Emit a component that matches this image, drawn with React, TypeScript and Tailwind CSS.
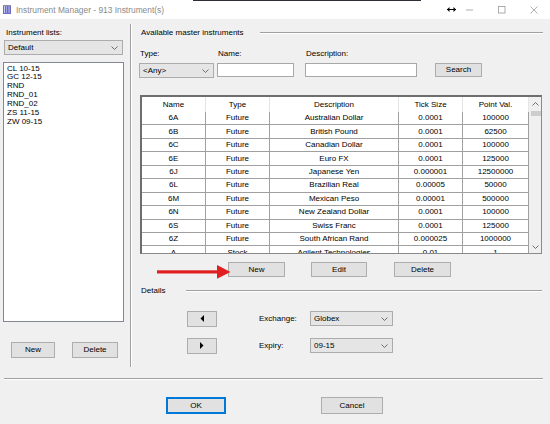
import React from "react";

const rows = [
  ["6A", "Future", "Australian Dollar", "0.0001", "100000"],
  ["6B", "Future", "British Pound", "0.0001", "62500"],
  ["6C", "Future", "Canadian Dollar", "0.0001", "100000"],
  ["6E", "Future", "Euro FX", "0.0001", "125000"],
  ["6J", "Future", "Japanese Yen", "0.000001", "12500000"],
  ["6L", "Future", "Brazilian Real", "0.00005", "50000"],
  ["6M", "Future", "Mexican Peso", "0.00001", "500000"],
  ["6N", "Future", "New Zealand Dollar", "0.0001", "100000"],
  ["6S", "Future", "Swiss Franc", "0.0001", "125000"],
  ["6Z", "Future", "South African Rand", "0.000025", "1000000"],
  ["A", "Stock", "Agilent Technologies", "0.01", "1"],
];

const widths = ["w-[64px]", "w-[64px]", "w-[129px]", "w-[64px]", "w-[66px]"];

function Chevron({ up = false }: { up?: boolean }) {
  return (
    <svg width="7" height="4" viewBox="0 0 7 4">
      <path
        d={up ? "M0.5 3.5 L3.5 0.5 L6.5 3.5" : "M0.5 0.5 L3.5 3.5 L6.5 0.5"}
        fill="none"
        stroke="#606060"
        strokeWidth="0.9"
      />
    </svg>
  );
}

function Combo({ value, className }: { value: string; className: string }) {
  return (
    <div
      className={`flex items-center justify-between h-[15px] bg-[#e5e5e5] border border-[#acacac] pl-[3px] pr-[4px] ${className}`}
    >
      <span>{value}</span>
      <Chevron />
    </div>
  );
}

function Btn({ label, className }: { label: string; className: string }) {
  return (
    <div
      className={`flex items-center justify-center bg-[#e1e1e1] border border-[#adadad] ${className}`}
    >
      {label}
    </div>
  );
}

function Etched({ className }: { className: string }) {
  return (
    <div className={`flex flex-col ${className}`}>
      <div className="h-px bg-[#a0a0a0]" />
      <div className="h-px bg-white" />
    </div>
  );
}

export default function App() {
  return (
    <div className="relative w-[550px] h-[424px] overflow-hidden bg-[#f0f0f0] text-[8px] text-black font-['Liberation_Sans',Arial,sans-serif] leading-[10px]">
      {/* title bar */}
      <div className="relative flex items-center h-[19px] bg-white">
        <div className="absolute top-0 left-[193px] w-[228px] h-px bg-[#2d2d3a]" />
        <svg className="ml-[3px]" width="8" height="9" viewBox="0 0 8 9">
          <rect x="0" y="0" width="8" height="9" fill="#6c6cc4" />
          <rect x="1" y="1" width="1" height="7" fill="#c9c9ef" />
          <rect x="3" y="1" width="1" height="7" fill="#a4a4e4" />
          <rect x="5" y="1" width="2" height="7" fill="#9292d8" />
          <rect x="0" y="0" width="8" height="1" fill="#8d8d9c" />
        </svg>
        <span className="ml-[5px] text-[8.4px] text-[#8a8a8a]">
          Instrument Manager - 913 Instrument(s)
        </span>
        <svg className="ml-auto" width="9" height="5" viewBox="0 0 9 5">
          <path d="M0 2.5 L9 2.5" stroke="#000" strokeWidth="1" />
          <path d="M0 2.5 L2.5 0 L2.5 5 Z M9 2.5 L6.5 0 L6.5 5 Z" fill="#000" />
        </svg>
        <svg className="ml-[10px]" width="8" height="2" viewBox="0 0 8 2">
          <path d="M0 1 L7 1" stroke="#9a9a9a" strokeWidth="0.8" />
        </svg>
        <svg className="ml-[24px]" width="8" height="8" viewBox="0 0 8 8">
          <rect x="0.5" y="0.5" width="6.5" height="6.5" fill="none" stroke="#9a9a9a" strokeWidth="0.8" />
        </svg>
        <svg className="ml-[24px] mr-[12px]" width="8" height="8" viewBox="0 0 8 8">
          <path d="M0.5 0.5 L7.5 7.5 M7.5 0.5 L0.5 7.5" stroke="#9a9a9a" strokeWidth="0.8" />
        </svg>
      </div>

      {/* body */}
      <div className="flex h-[348px]">
        {/* left column */}
        <div className="ml-[3px] w-[121px] flex flex-col">
          <div className="mt-[9px] h-[10px] ml-[3px]">Instrument lists:</div>
          <Combo value="Default" className="mt-[2px] mx-[1px]" />
          <div className="mt-[7px] h-[260px] bg-white border border-[#828790] pl-[3px] pt-[1.5px] leading-[8.9px]">
            <div>CL 10-15</div>
            <div>GC 12-15</div>
            <div>RND</div>
            <div>RND_01</div>
            <div>RND_02</div>
            <div>ZS 11-15</div>
            <div>ZW 09-15</div>
          </div>
          <div className="flex mt-[20px]">
            <Btn label="New" className="ml-[8px] w-[44px] h-[16px]" />
            <Btn label="Delete" className="ml-[17px] w-[46px] h-[16px]" />
          </div>
        </div>

        {/* separator */}
        <div className="ml-[6px] mt-[5px] h-[343px] flex">
          <div className="w-px bg-[#a0a0a0]" />
          <div className="w-px bg-white" />
        </div>

        {/* right column */}
        <div className="ml-[6px] w-[405px] flex flex-col">
          <div className="mt-[9px] h-[10px] flex items-center">
            <span className="ml-[3px]">Available master instruments</span>
            <Etched className="flex-1 ml-[16px]" />
          </div>

          <div className="mt-[11px] flex items-start">
            <div className="ml-[1px] w-[75px] flex flex-col">
              <div className="h-[10px] ml-[1px] mb-[4px]">Type:</div>
              <Combo value="<Any>" className="" />
            </div>
            <div className="ml-[3px] w-[77px] flex flex-col">
              <div className="h-[10px] ml-[1px] mb-[4px]">Name:</div>
              <div className="h-[14px] bg-white border border-[#a8a8a8]" />
            </div>
            <div className="ml-[11px] w-[112px] flex flex-col">
              <div className="h-[10px] ml-[1px] mb-[4px]">Description:</div>
              <div className="h-[14px] bg-white border border-[#a8a8a8]" />
            </div>
            <Btn label="Search" className="ml-[18px] mt-[14px] w-[47px] h-[14px]" />
          </div>

          {/* table */}
          <div className="ml-[2px] mt-[17px] w-[402px] h-[159px] flex overflow-hidden bg-white border-r border-b border-[#8a8a8a] border-t-2 border-l-2 border-t-[#6e6e6e] border-l-[#6e6e6e]">
            <div className="w-[387px] flex flex-col overflow-hidden">
              <div className="flex h-[15px] shrink-0">
                {["Name", "Type", "Description", "Tick Size", "Point Val."].map((h, i) => (
                  <div
                    key={h}
                    className={`${widths[i]} shrink-0 flex items-center justify-center border-r border-[#e5e5e5]`}
                  >
                    {h}
                  </div>
                ))}
              </div>
              {rows.map((r) => (
                <div key={r[0]} className="flex h-[13.45px] shrink-0">
                  {r.map((c, i) => (
                    <div
                      key={i}
                      className={`${widths[i]} shrink-0 flex items-center justify-center border-r border-b border-[#a0a0a0]`}
                    >
                      {c}
                    </div>
                  ))}
                </div>
              ))}
            </div>
            <div className="w-[12px] bg-[#f0f0f0] flex flex-col">
              <div className="h-[14px] flex items-center justify-center">
                <Chevron up />
              </div>
              <div className="h-[5px] ml-[2px] bg-[#cdcdcd]" />
              <div className="flex-1" />
              <div className="h-[13px] flex items-center justify-center">
                <Chevron />
              </div>
            </div>
          </div>

          <div className="flex mt-[8px]">
            <Btn label="New" className="ml-[90px] w-[57px] h-[15px]" />
            <Btn label="Edit" className="ml-[26px] w-[56px] h-[15px]" />
            <Btn label="Delete" className="ml-[27px] w-[57px] h-[15px]" />
          </div>

          <div className="mt-[9px] h-[10px] flex items-center">
            <span className="ml-[3px] w-[45px]">Details</span>
            <Etched className="flex-1 mr-[1px]" />
          </div>

          <div className="mt-[14px] flex items-center h-[17px]">
            <div className="ml-[49px] w-[30px] h-[16px] bg-[#e1e1e1] border border-[#adadad] flex items-center justify-center">
              <svg width="4" height="7" viewBox="0 0 4 7">
                <path d="M4 0 L0.5 3.5 L4 7 Z" fill="#000" />
              </svg>
            </div>
            <span className="ml-[42px] w-[51px]">Exchange:</span>
            <Combo value="Globex" className="w-[83px]" />
          </div>
          <div className="mt-[10px] flex items-center h-[17px]">
            <div className="ml-[49px] w-[30px] h-[16px] bg-[#e1e1e1] border border-[#adadad] flex items-center justify-center">
              <svg width="4" height="7" viewBox="0 0 4 7">
                <path d="M0 0 L3.5 3.5 L0 7 Z" fill="#000" />
              </svg>
            </div>
            <span className="ml-[42px] w-[51px]">Expiry:</span>
            <Combo value="09-15" className="w-[83px]" />
          </div>
        </div>
      </div>

      {/* bottom */}
      <Etched className="ml-[4px] mt-[11px] w-[539px]" />
      <div className="flex mt-[17px]">
        <div className="ml-[166px] w-[60px] h-[17px] flex items-center justify-center bg-[#e1e1e1] border-2 border-[#0078d7]">
          OK
        </div>
        <Btn label="Cancel" className="ml-[95px] w-[62px] h-[17px]" />
      </div>

      {/* red annotation arrow */}
      <svg
        className="absolute left-[157px] top-[265px]"
        width="74"
        height="14"
        viewBox="0 0 74 14"
      >
        <rect x="0" y="5.3" width="62" height="3.2" fill="#e02020" />
        <polygon points="60,0 73.5,6.9 60,13.8" fill="#e02020" />
      </svg>
    </div>
  );
}
